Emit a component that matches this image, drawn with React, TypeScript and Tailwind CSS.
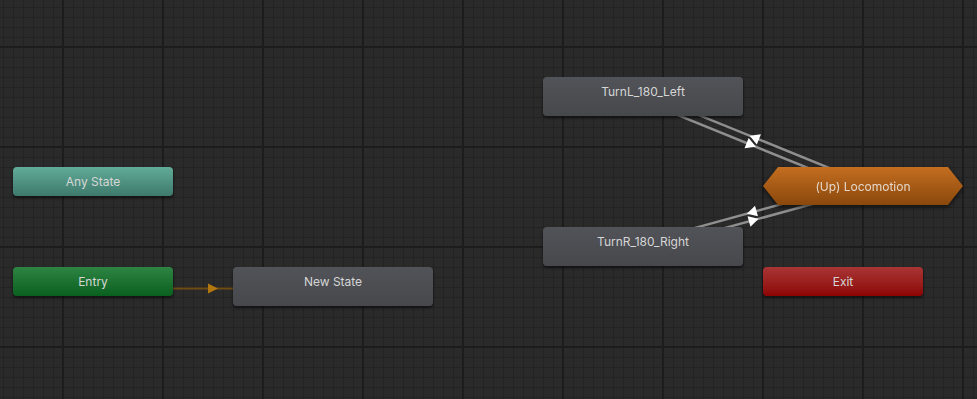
import type { ReactNode } from "react";

type Pt = [number, number];

// centre-to-centre link with perpendicular offset, arrow at midpoint
function link(a: Pt, b: Pt, off: number) {
  const dx = b[0] - a[0];
  const dy = b[1] - a[1];
  const len = Math.hypot(dx, dy);
  const u: Pt = [dx / len, dy / len];
  const n: Pt = [-u[1], u[0]];
  const p1: Pt = [a[0] + n[0] * off, a[1] + n[1] * off];
  const p2: Pt = [b[0] + n[0] * off, b[1] + n[1] * off];
  const m: Pt = [(p1[0] + p2[0]) / 2, (p1[1] + p2[1]) / 2];
  const tip: Pt = [m[0] + u[0] * 5, m[1] + u[1] * 5];
  const c1: Pt = [m[0] - u[0] * 5 + n[0] * 5.5, m[1] - u[1] * 5 + n[1] * 5.5];
  const c2: Pt = [m[0] - u[0] * 5 - n[0] * 5.5, m[1] - u[1] * 5 - n[1] * 5.5];
  return { p1, p2, arrow: [tip, c1, c2].map((p) => p.join(",")).join(" ") };
}

const turnL: Pt = [642.5, 96.5];
const turnR: Pt = [642.5, 246.5];
const loco: Pt = [863, 186];

const links = [
  link(turnL, loco, 4),
  link(loco, turnL, 4),
  link(turnR, loco, 4),
  link(loco, turnR, 4),
];

function Label({ children }: { children: ReactNode }) {
  return (
    <div className="flex h-[29px] items-center justify-center text-[12px] text-[#d6d6d6]">
      {children}
    </div>
  );
}

export default function App() {
  return (
    <div
      className="relative h-[399px] w-[977px] overflow-hidden bg-[#2a2a2a] bg-[image:linear-gradient(to_right,#1c1c1c_2px,transparent_2px),linear-gradient(to_bottom,#1c1c1c_2px,transparent_2px),linear-gradient(to_right,#232323_1px,transparent_1px),linear-gradient(to_bottom,#232323_1px,transparent_1px)] bg-[length:100px_100px,100px_100px,10px_10px,10px_10px] bg-[position:62px_0,0_46px,3px_0,0_7px]"
      style={{ fontFamily: "Inter, 'Noto Sans', sans-serif" }}
    >
      <svg className="absolute inset-0" width={977} height={399}>
        {links.map((l, i) => (
          <line
            key={i}
            x1={l.p1[0]}
            y1={l.p1[1]}
            x2={l.p2[0]}
            y2={l.p2[1]}
            stroke="#8f8f8f"
            strokeWidth={2.5}
          />
        ))}
        {links.map((l, i) => (
          <polygon key={i} points={l.arrow} fill="#ffffff" />
        ))}
        <line x1={172} y1={288.5} x2={234} y2={288.5} stroke="#6f4c12" strokeWidth={2} />
        <polygon points="218,288.5 208,283.5 208,293.5" fill="#b27810" />
      </svg>

      {/* Any State */}
      <div className="absolute left-[13px] top-[167px] h-[29px] w-[160px] rounded-[4px] bg-gradient-to-b from-[#62ab99] to-[#3e7a6c] shadow-[0_2px_3px_rgba(0,0,0,0.55)]">
        <Label>Any State</Label>
      </div>

      {/* Entry */}
      <div className="absolute left-[13px] top-[267px] h-[29px] w-[160px] rounded-[4px] bg-gradient-to-b from-[#2d8443] to-[#08601f] shadow-[0_2px_3px_rgba(0,0,0,0.55)]">
        <Label>Entry</Label>
      </div>

      {/* New State */}
      <div className="absolute left-[233px] top-[267px] h-[39px] w-[200px] rounded-[4px] bg-gradient-to-b from-[#515358] to-[#46484c] shadow-[0_2px_3px_rgba(0,0,0,0.55)]">
        <Label>New State</Label>
      </div>

      {/* TurnL */}
      <div className="absolute left-[543px] top-[77px] h-[39px] w-[200px] rounded-[4px] bg-gradient-to-b from-[#515358] to-[#46484c] shadow-[0_2px_3px_rgba(0,0,0,0.55)]">
        <Label>TurnL_180_Left</Label>
      </div>

      {/* TurnR */}
      <div className="absolute left-[543px] top-[227px] h-[39px] w-[200px] rounded-[4px] bg-gradient-to-b from-[#515358] to-[#46484c] shadow-[0_2px_3px_rgba(0,0,0,0.55)]">
        <Label>TurnR_180_Right</Label>
      </div>

      {/* Locomotion */}
      <div className="absolute left-[763px] top-[167px] h-[38px] w-[200px] drop-shadow-[0_2px_2px_rgba(0,0,0,0.6)]">
        <div className="flex h-full w-full items-center justify-center bg-gradient-to-b from-[#c46e20] to-[#8a480c] text-[12px] text-[#e4d8cc] [clip-path:polygon(0_50%,15px_0,185px_0,100%_50%,185px_100%,15px_100%)]">
          <span className="pt-[2px]">(Up) Locomotion</span>
        </div>
      </div>

      {/* Exit */}
      <div className="absolute left-[763px] top-[267px] h-[29px] w-[160px] rounded-[4px] bg-gradient-to-b from-[#a83434] to-[#8c0202] shadow-[0_2px_3px_rgba(0,0,0,0.55)]">
        <Label>Exit</Label>
      </div>
    </div>
  );
}
